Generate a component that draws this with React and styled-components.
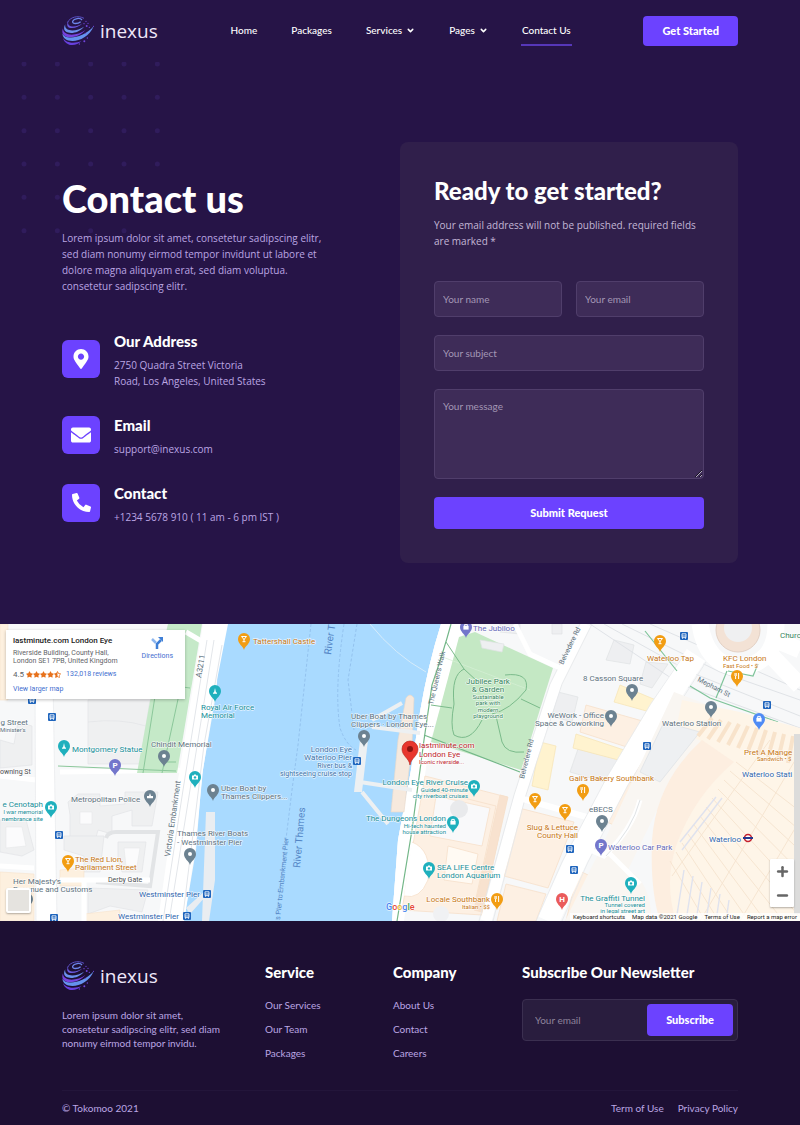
import React from "react";
import styled, { createGlobalStyle, css } from "styled-components";
import { FaMapMarkerAlt, FaEnvelope, FaPhoneAlt, FaStar, FaStarHalfAlt } from "react-icons/fa";
import { ChevronDown, Plus, Minus } from "lucide-react";

const c = {
  bg: "#261447",
  footer: "#1d0f33",
  card: "#301f4b",
  field: "#3e2c58",
  fieldBorder: "#503e6b",
  accent: "#6c42ff",
  lilac: "#bba6e3",
  soft: "#c3b7d6",
  muted: "#a397b5",
};

const GlobalStyle = createGlobalStyle`
  *, *::before, *::after { box-sizing: border-box; }
  body {
    margin: 0;
    background: ${c.bg};
    color: #fff;
    font-family: Lato, "Open Sans", sans-serif;
    font-size: 10px;
    line-height: 16px;
  }
  a { color: inherit; text-decoration: none; }
  h1, h2, h3, p, ul, address { margin: 0; padding: 0; font-style: normal; }
  ul { list-style: none; }
  button, input, textarea { font: inherit; }
`;

const Container = styled.div`
  width: 100%;
  max-width: 1320px;
  margin: 0 auto;
  padding: 0 62px;
`;

const HeaderBar = styled(Container).attrs({ as: "header" })`
  display: flex;
  align-items: center;
  justify-content: space-between;
  height: 62px;
`;

const LogoLink = styled.a`
  display: flex;
  align-items: center;
  gap: 6px;
  color: #efe8fa;
  font-family: "Open Sans", sans-serif;
  font-size: 19px;
  line-height: 30px;
`;

const Nav = styled.nav`
  display: flex;
  gap: 32px;
`;

const NavLink = styled.a`
  display: inline-flex;
  align-items: center;
  gap: 4px;
  padding: 6px 1px;
  border-bottom: 2px solid ${(p) => (p.$active ? "#5637b8" : "transparent")};
  font-weight: 500;
`;

const Button = styled.button`
  border: 0;
  border-radius: 4px;
  background: ${c.accent};
  color: #fff;
  font-size: 11px;
  font-weight: 900;
  height: ${(p) => p.$height || 32}px;
  padding: 0 19px;
  cursor: pointer;
  white-space: nowrap;
`;

const Hero = styled(Container).attrs({ as: "main" })`
  position: relative;
  display: grid;
  grid-template-columns: minmax(0, 1fr) minmax(0, 1fr);
  align-items: center;
  padding-top: 80px;
  padding-bottom: 61px;
`;

const Dots = styled.svg`
  position: absolute;
  left: 20px;
  top: 0;
`;

const Intro = styled.section`
  position: relative;
  padding: 0 60px 2px 0;
`;

const Title = styled.h1`
  font-size: 38px;
  line-height: 40px;
  font-weight: 900;
`;

const Lead = styled.p`
  margin-top: 12px;
  color: ${c.lilac};
  font-family: "Open Sans", sans-serif;
  white-space: nowrap;
`;

const ContactList = styled.ul`
  display: grid;
  gap: 25px;
  margin-top: 36px;
`;

const ContactItem = styled.li`
  display: flex;
  align-items: center;
  gap: 14px;
`;

const IconTile = styled.span`
  display: grid;
  place-items: center;
  width: 38px;
  height: 38px;
  margin-bottom: 2px;
  border-radius: 6px;
  background: ${c.accent};
`;

const ContactTitle = styled.h3`
  font-size: 15px;
  line-height: 22px;
  font-weight: 900;
  margin-bottom: 5px;
`;

const ContactText = styled.address`
  color: ${c.lilac};
  font-family: "Open Sans", sans-serif;
`;

const FormCard = styled.section`
  position: relative;
  padding: 34px;
  border-radius: 8px;
  background: ${c.card};
`;

const CardTitle = styled.h2`
  font-size: 24px;
  line-height: 30px;
  font-weight: 900;
`;

const CardText = styled.p`
  margin-top: 11px;
  color: ${c.soft};
  font-family: "Open Sans", sans-serif;
`;

const Form = styled.form`
  display: grid;
  grid-template-columns: 1fr 1fr;
  gap: 18px 14px;
  margin-top: 32px;
`;

const fieldLook = css`
  width: 100%;
  min-width: 0;
  padding: 0 8px;
  border: 1px solid ${c.fieldBorder};
  border-radius: 4px;
  background: ${c.field};
  color: #fff;
  outline: none;
  &::placeholder { color: ${c.muted}; opacity: 1; }
`;

const Field = styled.input`
  ${fieldLook}
  height: 36px;
  grid-column: ${(p) => (p.$wide ? "1 / -1" : "auto")};
`;

const MessageField = styled.textarea`
  ${fieldLook}
  display: block;
  height: 90px;
  padding-top: 8px;
  grid-column: 1 / -1;
  resize: vertical;
`;

const SubmitButton = styled(Button)`
  grid-column: 1 / -1;
`;

const MapSection = styled.section`
  position: relative;
  height: 297px;
  overflow: hidden;
  background: #f8f9fa;
  color: #5f6368;
  font-family: Roboto, sans-serif;
`;

const MapDrawing = styled.svg`
  display: block;
  width: 100%;
  height: 100%;
  font-family: Roboto, sans-serif;
`;

const PlaceCard = styled.div`
  position: absolute;
  left: 6px;
  top: 6px;
  display: flex;
  justify-content: space-between;
  width: 179px;
  padding: 5px 12px 4px 7px;
  background: #fff;
  box-shadow: 0 1px 3px rgba(0, 0, 0, 0.25);
  font-size: 7px;
  line-height: 8px;
`;

const PlaceName = styled.h3`
  color: #222;
  font-size: 8px;
  line-height: 12px;
  font-weight: 500;
  margin-bottom: 2px;
  white-space: nowrap;
`;

const Rating = styled.div`
  display: flex;
  align-items: center;
  gap: 2px;
  margin: 4px 0;
  font-size: 8px;
`;

const Stars = styled.span`
  display: inline-flex;
  margin-right: 3px;
  color: #e7711b;
`;

const MapLink = styled.a`
  color: #3f6fd0;
  font-size: 7px;
  line-height: 11px;
`;

const Directions = styled(MapLink)`
  display: flex;
  flex-direction: column;
  align-items: center;
  gap: 2px;
  margin: 1px 0 0 -12px;
`;

const Thumb = styled.button`
  position: absolute;
  left: 6px;
  bottom: 8px;
  width: 25px;
  height: 25px;
  border: 2px solid #fff;
  border-radius: 2px;
  background: #e5e3df;
  box-shadow: 0 1px 2px rgba(0, 0, 0, 0.3);
`;

const ZoomBox = styled.div`
  position: absolute;
  right: 6px;
  bottom: 14px;
  width: 24px;
  background: #fff;
  border-radius: 1px;
  box-shadow: 0 1px 2px rgba(0, 0, 0, 0.3);
`;

const ZoomButton = styled.button`
  display: grid;
  place-items: center;
  width: 24px;
  height: 24px;
  padding: 0;
  border: 0;
  background: none;
  color: #666;
`;

const Attribution = styled.div`
  position: absolute;
  right: 0;
  bottom: 0;
  display: flex;
  gap: 7px;
  padding: 0 3px;
  background: rgba(255, 255, 255, 0.75);
  color: #222;
  font-size: 6px;
  line-height: 8px;
`;

const FooterArea = styled.footer`
  background: ${c.footer};
  color: ${c.lilac};
  line-height: 14px;
`;

const FooterGrid = styled(Container)`
  display: grid;
  grid-template-columns: minmax(0, 203fr) minmax(0, 128fr) minmax(0, 129fr) minmax(0, 216fr);
  padding-top: 40px;
  padding-bottom: 30px;
`;

const FooterText = styled.p`
  margin-top: 17px;
  white-space: nowrap;
`;

const FooterTitle = styled.h3`
  color: #fff;
  font-size: 15px;
  line-height: 22px;
  font-weight: 900;
  white-space: nowrap;
`;

const FooterLinks = styled.ul`
  display: grid;
  gap: 10px;
  margin-top: 15px;
`;

const Newsletter = styled.form`
  display: flex;
  margin-top: 16px;
  padding: 4px;
  border: 1px solid #3b2f50;
  border-radius: 4px;
  background: #291d3e;
`;

const NewsletterInput = styled.input`
  flex: 1;
  min-width: 0;
  padding: 0 8px;
  border: 0;
  background: none;
  color: #fff;
  outline: none;
  &::placeholder { color: #8d839b; opacity: 1; }
`;

const FooterBottom = styled.div`
  display: flex;
  justify-content: space-between;
  padding: 10px 0;
  border-top: 1px solid #23153a;
`;

const LegalLinks = styled.div`
  display: flex;
  gap: 14px;
`;

function Logo() {
  return (
    <LogoLink href="#">
      <svg width="32" height="30" viewBox="0 0 96 90" fill="none" aria-hidden="true">
        <path d="M16 20C24 3 48 -3 66 7" stroke="#5a4fc4" strokeWidth="3" />
        <path d="M60 12C54 4 36 7 32 16C30 25 48 24 56 17" stroke="#6d86ea" strokeWidth="4" />
        <path d="M20 14C10 36 46 35 62 22C44 42 2 42 20 14Z" fill="#6a58df" />
        <path d="M10 24C4 50 46 47 66 32C44 60 -8 56 10 24Z" fill="#6b91ee" />
        <path d="M3 37C2 63 48 60 70 42C44 73 -10 70 3 37Z" fill="#7642df" />
        <path d="M1 52C8 74 62 68 95 31C74 83 2 88 1 52Z" fill="#6592ee" />
        <path d="M3 66C14 84 42 82 58 75C42 93 10 92 3 66Z" fill="#6840df" />
        <g fill="#7146dc">
          <circle cx="66" cy="23" r="2" /><circle cx="72" cy="16" r="2" />
          <circle cx="78" cy="22" r="2" /><circle cx="74" cy="30" r="3" />
          <circle cx="82" cy="34" r="2" /><circle cx="70" cy="52" r="2" />
          <circle cx="95" cy="31" r="2" /><circle cx="67" cy="76" r="3" />
          <circle cx="52" cy="84" r="2" /><circle cx="76" cy="66" r="2" />
        </g>
      </svg>
      <span>inexus</span>
    </LogoLink>
  );
}

const dotRows = [5, 5, 5, 5, 2, 4];

const K = {
  orange: "#f29d13", teal: "#1fb0bd", grey: "#6c8291", purple: "#7376cb", red: "#ea5b5b", blue: "#4f8bf5",
};
const T = {
  orange: "#c77715", teal: "#178f99", grey: "#60727e", purple: "#6467b8", red: "#c0252e",
  blue: "#2f66ae", green: "#37855f", dark: "#4c4f52", pier: "#3f73a8", water: "#5486c6",
};

const labels = [
  [253, 644, "Tattershall Castle", "orange"],
  [201, 710, "Royal Air Force", "teal"], [201, 718, "Memorial", "teal"],
  [72, 752, "Montgomery Statue", "teal"],
  [151, 747, "Chindit Memorial", "grey"],
  [28, 725, "g Street", "grey", 8, "end"], [0, 732, "Minister's", "grey", 6],
  [0, 774, "owning St", "dark", 7],
  [221, 791, "Uber Boat by", "grey"], [221, 799, "Thames Clippers...", "grey"],
  [71, 802, "Metropolitan Police", "grey"],
  [43, 807, "e Cenotaph", "teal", 8, "end"], [43, 814, "l war memorial", "teal", 6, "end"], [43, 821, "nembrance site", "teal", 6, "end"],
  [177, 836, "Thames River Boats", "grey"], [177, 845, "- Westminster Pier", "grey"],
  [75, 862, "The Red Lion,", "orange"], [75, 870, "Parliament Street", "orange"],
  [108, 882, "Derby Gate", "dark", 7],
  [13, 884, "Her Majesty's", "grey"], [13, 892, "Revenue and Customs", "grey"],
  [139, 897, "Westminster Pier", "blue"], [118, 919, "Westminster Pier", "blue"],
  [351, 719, "Uber Boat by Thames", "grey"], [351, 727, "Clippers · London Eye...", "grey"],
  [352, 752, "London Eye", "pier", 8, "end"], [352, 760, "Waterloo Pier", "pier", 8, "end"],
  [352, 768, "River bus &", "pier", 7, "end"], [352, 776, "sightseeing cruise stop", "pier", 7, "end"],
  [419, 748, "lastminute.com", "red"], [419, 757, "London Eye", "red"], [419, 764, "Iconic riverside...", "red", 6],
  [488, 684, "Jubilee Park", "green", 8, "middle"], [488, 692, "& Garden", "green", 8, "middle"],
  [488, 699, "Sustainable", "green", 6, "middle"], [488, 705, "park with", "green", 6, "middle"],
  [488, 712, "modern", "green", 6, "middle"], [488, 718, "playground", "green", 6, "middle"],
  [473, 631, "The Jubiloo", "purple"],
  [468, 785, "London Eye River Cruise", "teal", 8, "end"], [468, 792, "Guided 40-minute", "teal", 6, "end"], [468, 798, "city riverboat cruises", "teal", 6, "end"],
  [446, 821, "The Dungeons London", "teal", 8, "end"], [446, 828, "Hi-tech haunted", "teal", 6, "end"], [446, 834, "house attraction", "teal", 6, "end"],
  [437, 870, "SEA LIFE Centre", "teal"], [437, 878, "London Aquarium", "teal"],
  [490, 902, "Locale Southbank", "orange", 8, "end"], [490, 909, "Italian • $$", "orange", 6, "end"],
  [647, 661, "Waterloo Tap", "orange"],
  [723, 661, "KFC London", "orange"], [723, 668, "Fast Food • $", "orange", 6],
  [583, 681, "8 Casson Square", "grey"],
  [604, 718, "WeWork - Office", "grey", 8, "end"], [604, 726, "Space & Coworking", "grey", 8, "end"],
  [662, 726, "Waterloo Station", "grey"],
  [780, 638, "Churc", "green"],
  [744, 755, "Pret A Mange", "orange"], [757, 761, "Sandwich • $", "orange", 6],
  [742, 777, "Waterloo Stati", "blue"],
  [569, 781, "Gail's Bakery Southbank", "orange"],
  [589, 812, "eBECS", "grey"],
  [578, 830, "Slug & Lettuce", "orange", 8, "end"], [578, 838, "County Hall", "orange", 8, "end"],
  [608, 850, "Waterloo Car Park", "purple"],
  [709, 842, "Waterloo", "blue"],
  [645, 901, "The Graffiti Tunnel", "teal", 8, "end"], [645, 907, "Tunnel covered", "teal", 6, "end"], [645, 913, "in legal street art", "teal", 6, "end"],
];

const turned = [
  [201, 678, -80, "A3211", "grey", 8],
  [170, 857, -82, "Victoria Embankment", "grey", 8],
  [300, 868, -85, "River Thames", "water", 10],
  [331, 655, -82, "River T", "water", 10],
  [280, 920, -84, "s Pier to Embankment Pier", "water", 7],
  [433, 705, -77, "The Queen's Walk", "grey", 7],
  [563, 665, -64, "Belvedere Rd", "grey", 7],
  [524, 779, -76, "Belvedere Rd", "grey", 7],
  [697, 681, 27, "Mepham St", "grey", 7],
];

const pins = [
  [244, 639, "orange", "glass"], [215, 691, "teal", "statue"], [64, 746, "teal", "statue"],
  [164, 756, "grey"], [115, 765, "purple", "P"], [195, 777, "teal", "camera"], [213, 790, "grey"],
  [150, 796, "grey", "star"], [51, 807, "teal", "camera"], [190, 854, "grey"], [68, 861, "orange", "glass"],
  [27, 899, "grey"], [364, 736, "grey"], [466, 627, "purple", "bag"], [474, 786, "teal", "camera"],
  [453, 822, "teal", "bag"], [429, 868, "teal", "camera"], [497, 899, "orange", "fork"],
  [660, 641, "orange", "glass"], [737, 676, "orange", "fork"], [632, 690, "grey"], [611, 716, "grey"],
  [711, 707, "grey"], [759, 719, "blue", "bag"], [583, 790, "orange", "fork"], [535, 799, "orange", "glass"],
  [565, 810, "orange", "glass"], [602, 821, "grey"], [601, 845, "purple", "P"], [562, 899, "red", "H"],
  [631, 883, "teal", "camera"],
];

const stops = [
  [32, 700], [52, 717], [59, 835], [54, 918], [684, 636], [767, 705], [647, 746], [570, 849], [574, 870],
  [357, 761], [207, 894], [187, 916],
];

function PinGlyph({ kind }) {
  const w = { stroke: "#fff", strokeWidth: 1, fill: "none" };
  if (kind === "P" || kind === "H")
    return <text y="3" textAnchor="middle" fontSize="8" fontWeight="700" fill="#fff">{kind}</text>;
  if (kind === "glass") return <path d="M-2.5 -2.5H2.5L0 0.5ZM0 0V2.5M-1.5 2.7H1.5" {...w} />;
  if (kind === "fork") return <path d="M-2 -3V0M-0.8 -3V0M-1.4 0V3M1.6 -3V3" {...w} />;
  if (kind === "camera")
    return <g><path d="M-3 -1.6H-1.4L-0.8 -2.6H0.8L1.4 -1.6H3V2.4H-3Z" fill="#fff" /><circle cy="0.4" r="1.2" fill={K.teal} /></g>;
  if (kind === "bag")
    return <g><rect x="-2.6" y="-1.2" width="5.2" height="3.8" fill="#fff" /><path d="M-1.3 -1V-2.6H1.3V-1" {...w} /></g>;
  if (kind === "statue") return <path d="M0 -3L1 1.5H2V2.8H-2V1.5H-1Z" fill="#fff" />;
  if (kind === "star") return <path d="M-3 2.2V0H-1L0 -3L1 0H3V2.2Z" fill="#fff" />;
  return <circle r="2" fill="#fff" />;
}

function Pin({ x, y, color, kind }) {
  return (
    <g transform={`translate(${x} ${y})`}>
      <path d="M0 11C-1 7 -6 5 -6 0A6 6 0 1 1 6 0C6 5 1 7 0 11Z" fill={K[color]} />
      <PinGlyph kind={kind} />
    </g>
  );
}

const halo = { stroke: "#fff", strokeOpacity: 0.7, strokeWidth: 1.4, paintOrder: "stroke", strokeLinejoin: "round" };

function LondonMap() {
  return (
    <MapDrawing viewBox="0 624 800 297" preserveAspectRatio="xMidYMid slice" role="img" aria-label="Map of the London Eye area">
      <rect y="624" width="800" height="297" fill="#f7f8f9" />

      {/* blocks west of the river */}
      <g fill="#eff0f1" stroke="#e2e4e6" strokeWidth="0.7">
        <path d="M88 700H150L140 764H88Z" /><path d="M88 722Q120 718 146 726" />
        <path d="M0 740L14 744L18 722L32 726V765L0 768Z" />
        <path d="M68 802L78 794H100V806L125 804V792H158L152 826H132V810L112 816V834L98 830L94 845H70V815Z" />
        <path d="M0 820H26L34 850L22 856L0 852Z" />
        <path d="M64 836H104L100 872H84V856L64 850Z" />
        <path d="M106 838Q108 832 116 832H158L150 886L96 882" fill="none" strokeWidth="4" />
        <path d="M118 842H146L142 872H122L118 860Z" /><path d="M88 888L148 890L142 912L110 906L88 914Z" />
      </g>
      <g fill="#fbfbfc" stroke="#e6e8ea" strokeWidth="0.6">
        <path d="M6 827H22L26 846L6 848Z" /><path d="M124 848H140L137 866H126Z" /><path d="M80 812H92V824H80Z" />
      </g>
      <g fill="#fdf0df" stroke="#f6e3cc" strokeWidth="0.6">
        <path d="M0 624H8V700H0Z" /><path d="M0 872L34 874V921H0Z" /><path d="M60 870L84 868V886H60Z" /><path d="M84 914L120 910V921H84Z" />
      </g>
      <path d="M0 866L34 868M60 772L200 770M0 776L36 780M60 880L150 880M84 880V921" stroke="#fff" strokeWidth="5" fill="none" />
      <path d="M35 680L53 680L57 921H36Z" fill="#fff" stroke="#e8eaed" strokeWidth="0.7" />
      <path d="M168 624H202L177 773H137L152 690Z" fill="#c5e9c8" />
      <path d="M186 632L203 642" stroke="#fff" strokeWidth="5" />
      <path d="M156 690L143 773M180 690L162 773M58 766L176 771M160 684L190 688M165 762H176" stroke="#8bc79a" strokeWidth="1" fill="none" />

      {/* river */}
      <path d="M227 624L217 672Q218 684 214 706L202 775L196 850L184 921H392L398 840L411 770L420 712Q428 665 441 624Z" fill="#a9daff" />
      <path d="M203 624H228L217 680L203 770L195 850L184 921H158L178 780Z" fill="#fff" />
      <path d="M207 640L183 790L163 921M222 645L204 745L183 915M214 640L170 915" stroke="#e3e6ea" strokeWidth="1" fill="none" />
      <path d="M206 812H215V880L209 921H202Z M186 908L206 890V896L190 914Z" fill="#e9edf1" />
      <path d="M311 624L298 745L292 790L276 921M344 624Q334 690 340 728Q346 745 356 750M357 624L348 680L354 730" stroke="#8ab8e6" strokeWidth="0.7" strokeDasharray="3 2" fill="none" />
      <path d="M370 624Q395 655 426 672" stroke="#d6ecfb" strokeWidth="1" fill="none" />

      {/* east bank */}
      <path d="M441 624Q428 665 420 712L411 770L398 840L392 921H800V624Z" fill="#f7f8f9" />
      <path d="M441 624Q428 665 420 712L411 770L398 840L392 921H404L412 860L430 742L461 640L466 624Z" fill="#fff" />
      <path d="M406 698Q410 692 414 698L412 745L404 812H391L398 740Z" fill="#f6e9dd" stroke="#ead9ca" strokeWidth="0.6" />
      <path d="M402 703L372 720M360 782L412 790M362 792L388 824M372 727L420 733" stroke="#edf0f2" strokeWidth="4" fill="none" />
      <path d="M360 740H368L362 792H354Z" fill="#edf0f2" />
      <path d="M459 637L475 632L553 668L521 770L431 742Z" fill="#c4e8c4" />
      <path d="M440 656L530 690" stroke="#d6efd5" strokeWidth="0.7" />
      <path d="M446 642L464 669Q451 675 454 704Q450 725 454 735Q470 744 482 720M464 669L478 682M505 675Q530 672 526 690Q510 710 492 714M496 716L502 742Q506 754 524 752M521 699L540 708M431 705L452 708" stroke="#7bbb8b" strokeWidth="1" fill="none" />
      <path d="M451 624Q444 650 432 685L424 740L412 830L397 921M424 735L520 772" stroke="#73b788" strokeWidth="1.2" fill="none" />

      <g fill="#fdf0e3" stroke="#f6dfca" strokeWidth="0.8">
        <path d="M425 776L507 797L482 915L402 910L412 850Z" />
        <path d="M432 790L496 806L476 898" fill="none" />
        <path d="M500 795L508 797L482 912L474 910Z" fill="#f8e2cf" />
        <path d="M436 796L490 808L482 846L430 836Z" fill="#f9f9fa" />
        <path d="M412 842Q432 850 428 880Q420 900 404 896" fill="#fff" />
        <path d="M448 846L478 854L472 884L444 880Z" fill="#fffaf3" />
        <path d="M519 808L574 822L548 888L504 876Z" />
        <path d="M506 884L546 894L536 921H497Z" />
        <path d="M586 705L646 722L630 748L580 732Z" />
        <path d="M672 694L702 708L650 790L632 778Z" />
        <path d="M612 774L634 784L616 826L598 818Z" />
        <path d="M578 870L606 884L590 921H566Z" />
      </g>
      <circle cx="459" cy="809" r="9" fill="#e9eaec" /><circle cx="441" cy="914" r="8" fill="#f0f1f3" />
      <g fill="#eeeff1" stroke="#dfe2e4" strokeWidth="0.7">
        <path d="M614 640L634 645L630 664L606 660Z" /><path d="M646 662L668 664L652 688L640 684Z" />
        <path d="M558 692L578 697L572 722L552 716Z" /><path d="M578 749L628 762L618 786L570 772Z" />
        <path d="M480 640L504 644L502 652L482 648Z" /><path d="M500 624H520V634L500 632Z" /><path d="M552 624H562V634H552Z" />
        <path d="M612 848L618 852L604 880L599 876Z" />
      </g>
      <g fill="#fff3cf" stroke="#f6e4b4" strokeWidth="0.7">
        <path d="M620 685L656 700L650 712L614 702Z" /><path d="M576 734L630 752L626 762L573 748Z" /><path d="M540 742L556 746L548 790L532 786Z" />
      </g>

      {/* roads and rail lines */}
      <path d="M586 624L556 684L520 795L486 921" stroke="#fff" strokeWidth="11" fill="none" />
      <path d="M580 624L550 684L514 795L479 921M592 624L562 684L526 795L493 921" stroke="#e3e6e9" strokeWidth="0.8" fill="none" />
      <path d="M515 624L530 654L560 668" stroke="#fff" strokeWidth="5" fill="none" />
      <path d="M604 624L690 672L800 716M590 624L680 684L800 728M622 624L720 672L800 700M650 624L800 690" stroke="#dde0e4" strokeWidth="0.9" fill="none" />
      <path d="M516 797L590 818" stroke="#fff" strokeWidth="6" />
      <path d="M696 655L660 710L618 780L575 862L548 921" stroke="#fff" strokeWidth="22" fill="none" />
      <path d="M706 662L672 715L628 785L588 862L562 921M684 655L650 705L608 775L562 862L536 921" stroke="#e6e8eb" strokeWidth="0.8" fill="none" />
      <path d="M700 624Q706 664 738 668Q776 664 776 624M766 650L800 686M776 640L800 650" stroke="#fff" strokeWidth="17" fill="none" />
      <circle cx="738" cy="630" r="22" fill="#f3e2d5" stroke="#e3d1c5" strokeWidth="1" />
      <circle cx="738" cy="628" r="14" fill="#eff0f1" />
      <path d="M645 631L677 671M690 686L710 698L778 722M727 671L716 698M728 671L753 676L758 664" stroke="#7fc49a" strokeWidth="1.2" fill="none" />

      {/* station concourse and platforms */}
      <path d="M674 692L800 740V760L720 735L656 812L628 870Q650 880 652 921H565L600 850Z" fill="#f9f6f2" />
      <path d="M682 700L740 712L800 728V921H672Q664 880 672 850Q690 800 730 760Q700 738 676 730Z" fill="#fef5e8" />
      <path d="M702 740Q656 782 652 840Q650 890 660 921H676Q664 884 676 846Q694 796 734 762Z" fill="#fdeee0" />
      <path d="M664 722L700 732L660 782L640 772Z" fill="#eef0f2" stroke="#dde1e5" strokeWidth="0.7" />
      <g stroke="#f6e5d1" strokeWidth="1" fill="none">
        {[0, 1, 2, 3, 4, 5, 6, 7, 8, 9, 10, 11].map((i) => (
          <path key={i} d={`M${736 - i * 6} ${762 + i * 9}L${850 - i * 7} ${850 + i * 17}`} />
        ))}
        <path d="M770 740L672 876M800 752L700 921M800 820L740 921" />
      </g>
      <g stroke="#f8e3cb" strokeWidth="4">
        {[0, 1, 2, 3, 4, 5, 6, 7, 8, 9, 10].map((i) => (
          <path key={i} d={`M${712 + i * 9} ${718 + i * 2}L${698 + i * 10} ${736 + i * 3}`} />
        ))}
      </g>
      <g stroke="#dfe2ee" strokeWidth="1.4">
        {[0, 1, 2, 3, 4, 5].map((i) => (
          <path key={i} d={`M${684 + i * 9} ${870 + i * 6}L${676 + i * 10} 921`} />
        ))}
        <path d="M722 798L682 850M716 797L680 842" />
      </g>
      <path d="M640 800Q632 830 604 856L590 850M606 850L640 884" stroke="#fff" strokeWidth="5" fill="none" />
      <path d="M640 800Q632 830 606 856" stroke="#dfe3e6" strokeWidth="1" fill="none" />
      <rect x="794" y="734" width="6" height="180" fill="#dcdcdb" />

      {stops.map(([x, y]) => (
        <g key={`${x}-${y}`} transform={`translate(${x} ${y})`}>
          <rect x="-4" y="-4" width="8" height="8" rx="1" fill="#1f65bd" />
          <path d="M-2 -2.2H2V1.6H-2ZM-1.5 1.6V2.8M1.5 1.6V2.8M-2 0H2" stroke="#fff" strokeWidth="0.8" fill="none" />
        </g>
      ))}
      {pins.map(([x, y, color, kind]) => (
        <Pin key={`${x}-${y}`} x={x} y={y} color={color} kind={kind} />
      ))}
      {labels.map(([x, y, text, color, size = 8, anchor = "start"]) => (
        <text key={`${x}-${y}`} x={x} y={y} fill={T[color]} fontSize={size} textAnchor={anchor} {...halo}>{text}</text>
      ))}
      {turned.map(([x, y, angle, text, color, size]) => (
        <text key={`${x}-${y}`} transform={`translate(${x} ${y}) rotate(${angle})`} fill={T[color]} fontSize={size}>{text}</text>
      ))}

      <g>
        <circle cx="748" cy="838" r="3.5" fill="#fff" stroke="#c5202c" strokeWidth="1.6" />
        <rect x="743" y="837" width="10" height="2" fill="#253a8e" />
      </g>
      <path d="M410 765C409 758 402 756 402 749A8 8 0 1 1 418 749C418 756 411 758 410 765Z" fill="#e8362d" stroke="#b3211a" strokeWidth="0.6" />
      <circle cx="410" cy="749" r="3" fill="#8c1410" />
      <text x="386" y="910" fontSize="9" fontWeight="500" {...halo}>
        <tspan fill="#4a86f0">G</tspan><tspan fill="#e5483b">o</tspan><tspan fill="#f0b520">o</tspan><tspan fill="#4a86f0">g</tspan><tspan fill="#3ba657">l</tspan><tspan fill="#e5483b">e</tspan>
      </text>
    </MapDrawing>
  );
}

function MapBlock() {
  return (
    <MapSection>
      <LondonMap />
      <PlaceCard>
        <div>
          <PlaceName>lastminute.com London Eye</PlaceName>
          <p>Riverside Building, County Hall,<br />London SE1 7PB, United Kingdom</p>
          <Rating>
            4.5
            <Stars aria-hidden="true">
              <FaStar size={7} /><FaStar size={7} /><FaStar size={7} /><FaStar size={7} /><FaStarHalfAlt size={7} />
            </Stars>
            <MapLink href="#">132,018 reviews</MapLink>
          </Rating>
          <MapLink href="#">View larger map</MapLink>
        </div>
        <Directions href="#">
          <svg width="14" height="13" viewBox="0 0 14 13" aria-hidden="true">
            <path d="M7 13V8L11 4" stroke="#3f7fd6" strokeWidth="2.5" fill="none" />
            <path d="M8 1H13V6Z" fill="#3f7fd6" />
            <path d="M6 7L2 3" stroke="#8db6ee" strokeWidth="2.5" />
          </svg>
          Directions
        </Directions>
      </PlaceCard>
      <Thumb type="button" aria-label="Satellite view" />
      <ZoomBox>
        <ZoomButton type="button" aria-label="Zoom in"><Plus size={15} strokeWidth={4} /></ZoomButton>
        <ZoomButton type="button" aria-label="Zoom out"><Minus size={15} strokeWidth={4} /></ZoomButton>
      </ZoomBox>
      <Attribution>
        <span>Keyboard shortcuts</span>
        <span>Map data ©2021 Google</span>
        <a href="#">Terms of Use</a>
        <a href="#">Report a map error</a>
      </Attribution>
    </MapSection>
  );
}

const contacts = [
  { title: "Our Address", icon: <FaMapMarkerAlt size={20} />, text: <>2750 Quadra Street Victoria<br />Road, Los Angeles, United States</> },
  { title: "Email", icon: <FaEnvelope size={20} />, text: "support@inexus.com" },
  { title: "Contact", icon: <FaPhoneAlt size={19} />, text: "+1234 5678 910 ( 11 am - 6 pm IST )" },
];

const footerColumns = [
  { title: "Service", links: ["Our Services", "Our Team", "Packages"] },
  { title: "Company", links: ["About Us", "Contact", "Careers"] },
];

export default function App() {
  return (
    <>
      <GlobalStyle />
      <HeaderBar>
        <Logo />
        <Nav>
          <NavLink href="#">Home</NavLink>
          <NavLink href="#">Packages</NavLink>
          <NavLink href="#">Services <ChevronDown size={9} strokeWidth={4} /></NavLink>
          <NavLink href="#">Pages <ChevronDown size={9} strokeWidth={4} /></NavLink>
          <NavLink href="#" $active>Contact Us</NavLink>
        </Nav>
        <Button type="button" $height={30}>Get Started</Button>
      </HeaderBar>

      <Hero>
        <Dots width="140" height="172" viewBox="0 0 140 172" aria-hidden="true">
          {dotRows.flatMap((count, row) =>
            Array.from({ length: count }, (_, col) => (
              <circle key={`${row}-${col}`} cx={4 + (col * 400) / 12} cy={2 + (row * 400) / 12} r="2.5" fill="#301c5c" />
            ))
          )}
        </Dots>
        <Intro>
          <Title>Contact us</Title>
          <Lead>
            Lorem ipsum dolor sit amet, consetetur sadipscing elitr,<br />
            sed diam nonumy eirmod tempor invidunt ut labore et<br />
            dolore magna aliquyam erat, sed diam voluptua.<br />
            consetetur sadipscing elitr.
          </Lead>
          <ContactList>
            {contacts.map((item) => (
              <ContactItem key={item.title}>
                <IconTile>{item.icon}</IconTile>
                <div>
                  <ContactTitle>{item.title}</ContactTitle>
                  <ContactText>{item.text}</ContactText>
                </div>
              </ContactItem>
            ))}
          </ContactList>
        </Intro>

        <FormCard>
          <CardTitle>Ready to get started?</CardTitle>
          <CardText>Your email address will not be published. required fields<br />are marked *</CardText>
          <Form onSubmit={(e) => e.preventDefault()}>
            <Field type="text" placeholder="Your name" aria-label="Your name" />
            <Field type="email" placeholder="Your email" aria-label="Your email" />
            <Field type="text" placeholder="Your subject" aria-label="Your subject" $wide />
            <MessageField placeholder="Your message" aria-label="Your message" />
            <SubmitButton type="submit">Submit Request</SubmitButton>
          </Form>
        </FormCard>
      </Hero>

      <MapBlock />

      <FooterArea>
        <FooterGrid>
          <div>
            <Logo />
            <FooterText>
              Lorem ipsum dolor sit amet,<br />
              consetetur sadipscing elitr, sed diam<br />
              nonumy eirmod tempor invidu.
            </FooterText>
          </div>
          {footerColumns.map((col) => (
            <nav key={col.title} aria-label={col.title}>
              <FooterTitle>{col.title}</FooterTitle>
              <FooterLinks>
                {col.links.map((link) => (
                  <li key={link}><a href="#">{link}</a></li>
                ))}
              </FooterLinks>
            </nav>
          ))}
          <div>
            <FooterTitle>Subscribe Our Newsletter</FooterTitle>
            <Newsletter onSubmit={(e) => e.preventDefault()}>
              <NewsletterInput type="email" placeholder="Your email" aria-label="Newsletter email" />
              <Button type="submit">Subscribe</Button>
            </Newsletter>
          </div>
        </FooterGrid>
        <Container>
          <FooterBottom>
            <span>© Tokomoo 2021</span>
            <LegalLinks>
              <a href="#">Term of Use</a>
              <a href="#">Privacy Policy</a>
            </LegalLinks>
          </FooterBottom>
        </Container>
      </FooterArea>
    </>
  );
}
